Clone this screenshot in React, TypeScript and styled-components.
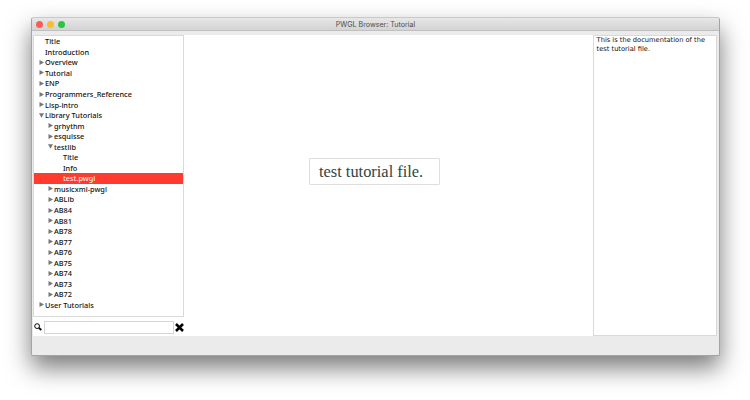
import React from 'react';
import styled, { createGlobalStyle } from 'styled-components';

const Global = createGlobalStyle`
  * { box-sizing: border-box; }
  html, body { margin: 0; background: #fff; }
  body { overflow: hidden; }
`;

const Desktop = styled.main`
  width: 750px;
  height: 400px;
  padding: 17px 30px 44px 31px;
  font-family: 'Noto Sans', 'Open Sans', sans-serif;
`;

const Window = styled.div`
  height: 339px;
  display: flex;
  flex-direction: column;
  background: #ebebeb;
  border: 1px solid #a4a4a4;
  border-top-color: #c9c9c9;
  border-radius: 3px 3px 2px 2px;
  box-shadow: 0 12px 24px rgba(0, 0, 0, 0.52);
`;

const TitleBar = styled.header`
  height: 13px;
  flex: none;
  display: grid;
  grid-template-columns: 60px 1fr 60px;
  align-items: center;
  background: linear-gradient(#e7e7e7, #d3d3d3);
  border-bottom: 1px solid #c0c0c0;
  border-radius: 2px 2px 0 0;
`;

const Lights = styled.div`
  display: flex;
  gap: 4px;
  padding-left: 4px;
`;

const Light = styled.i<{ $color: string }>`
  width: 7px;
  height: 7px;
  border-radius: 50%;
  background: ${(p) => p.$color};
`;

const WindowTitle = styled.h1`
  margin: 0;
  padding-top: 1px;
  font: 400 7.1px/12px Inter, Roboto, sans-serif;
  color: #4c4c4c;
  text-align: center;
  white-space: nowrap;
`;

const Body = styled.div`
  height: 301px;
  margin: 4px 2px 0 1px;
  display: grid;
  grid-template-columns: 151px 1fr 124px;
`;

const Sidebar = styled.aside`
  display: flex;
  flex-direction: column;
  background: #fff;
`;

const Tree = styled.ul`
  height: 282px;
  margin: 0;
  padding: 0;
  list-style: none;
  border: 1px solid #d9d9d9;
  background: #fff;
`;

const Row = styled.li<{ $level: number; $selected: boolean }>`
  height: 10.56px;
  display: flex;
  align-items: center;
  padding-left: ${(p) => 4.5 + p.$level * 9}px;
  background: ${(p) => (p.$selected ? '#ff3b30' : 'transparent')};
  color: ${(p) => (p.$selected ? '#ffe9e7' : '#111')};
  font-size: 7.35px;
  font-weight: 500;
  line-height: 10px;
  white-space: nowrap;
`;

const Twisty = styled.svg`
  width: 5px;
  height: 5px;
  margin-right: 1.5px;
  flex: none;
  fill: #777;
`;

const SearchBar = styled.div`
  height: 19px;
  display: flex;
  align-items: center;
  padding-top: 1px;
`;

const SearchIcon = styled.svg`
  width: 8px;
  height: 8px;
  margin: 0 2px 0 1px;
  flex: none;
`;

const SearchInput = styled.input`
  width: 130px;
  height: 13px;
  padding: 0 3px;
  border: 1px solid #d6d6d6;
  outline: none;
  font-size: 7.5px;
`;

const ClearButton = styled.button`
  width: 9px;
  height: 9px;
  margin-left: 1px;
  padding: 0;
  border: 0;
  background: none;
  display: flex;
`;

const Canvas = styled.section`
  padding-top: 123px;
  background: #fff;
`;

const CanvasText = styled.div`
  width: 131px;
  height: 27px;
  margin-left: 125.4px;
  padding-left: 8.6px;
  border: 1px solid #dedede;
  border-radius: 1px;
  font: 16.4px/25px 'Liberation Serif', serif;
  color: #2f4644;
  white-space: nowrap;
`;

const Documentation = styled.aside`
  padding: 0 2.6px;
  background: #fff;
  border: 1px solid #d9d9d9;
  font: 6.68px/8.5px 'DejaVu Sans', sans-serif;
  color: #111;
  white-space: pre;
`;

type Item = { label: string; level?: number; state?: 'open' | 'closed'; selected?: boolean };

const closed = (label: string, level = 0): Item => ({ label, level, state: 'closed' });

const items: Item[] = [
  { label: 'Title' },
  { label: 'Introduction' },
  closed('Overview'),
  closed('Tutorial'),
  closed('ENP'),
  closed('Programmers_Reference'),
  closed('Lisp-intro'),
  { label: 'Library Tutorials', state: 'open' },
  closed('grhythm', 1),
  closed('esquisse', 1),
  { label: 'testlib', level: 1, state: 'open' },
  { label: 'Title', level: 2 },
  { label: 'Info', level: 2 },
  { label: 'test.pwgl', level: 2, selected: true },
  closed('musicxml-pwgl', 1),
  ...['ABLib', 'AB84', 'AB81', 'AB78', 'AB77', 'AB76', 'AB75', 'AB74', 'AB73', 'AB72'].map((l) => closed(l, 1)),
  closed('User Tutorials'),
];

export default function App() {
  return (
    <Desktop>
      <Global />
      <Window>
        <TitleBar>
          <Lights>
            <Light $color="#fc5b57" />
            <Light $color="#fdbc2e" />
            <Light $color="#27c83f" />
          </Lights>
          <WindowTitle>PWGL Browser: Tutorial</WindowTitle>
        </TitleBar>
        <Body>
          <Sidebar>
            <Tree>
              {items.map((item, i) => (
                <Row key={i} $level={item.level ?? 0} $selected={!!item.selected}>
                  <Twisty viewBox="0 0 5 5">
                    {item.state === 'closed' && <path d="M.5 0 5 2.5 .5 5z" />}
                    {item.state === 'open' && <path d="M0 .3h5L2.5 4.8z" />}
                  </Twisty>
                  {item.label}
                </Row>
              ))}
            </Tree>
            <SearchBar>
              <SearchIcon viewBox="0 0 8 8" fill="none" stroke="#000">
                <circle cx="3.1" cy="3.1" r="2.4" strokeWidth="1" />
                <path d="M4.9 4.9 7.3 7" strokeWidth="1.9" />
              </SearchIcon>
              <SearchInput aria-label="Search" />
              <ClearButton aria-label="Clear">
                <svg width="9" height="9" viewBox="0 0 9 9" stroke="#000" strokeWidth="2.6">
                  <path d="M1 1 8 8M8 1 1 8" />
                </svg>
              </ClearButton>
            </SearchBar>
          </Sidebar>
          <Canvas>
            <CanvasText>test tutorial file.</CanvasText>
          </Canvas>
          <Documentation>{'This is the documentation of the\ntest tutorial file.'}</Documentation>
        </Body>
      </Window>
    </Desktop>
  );
}
